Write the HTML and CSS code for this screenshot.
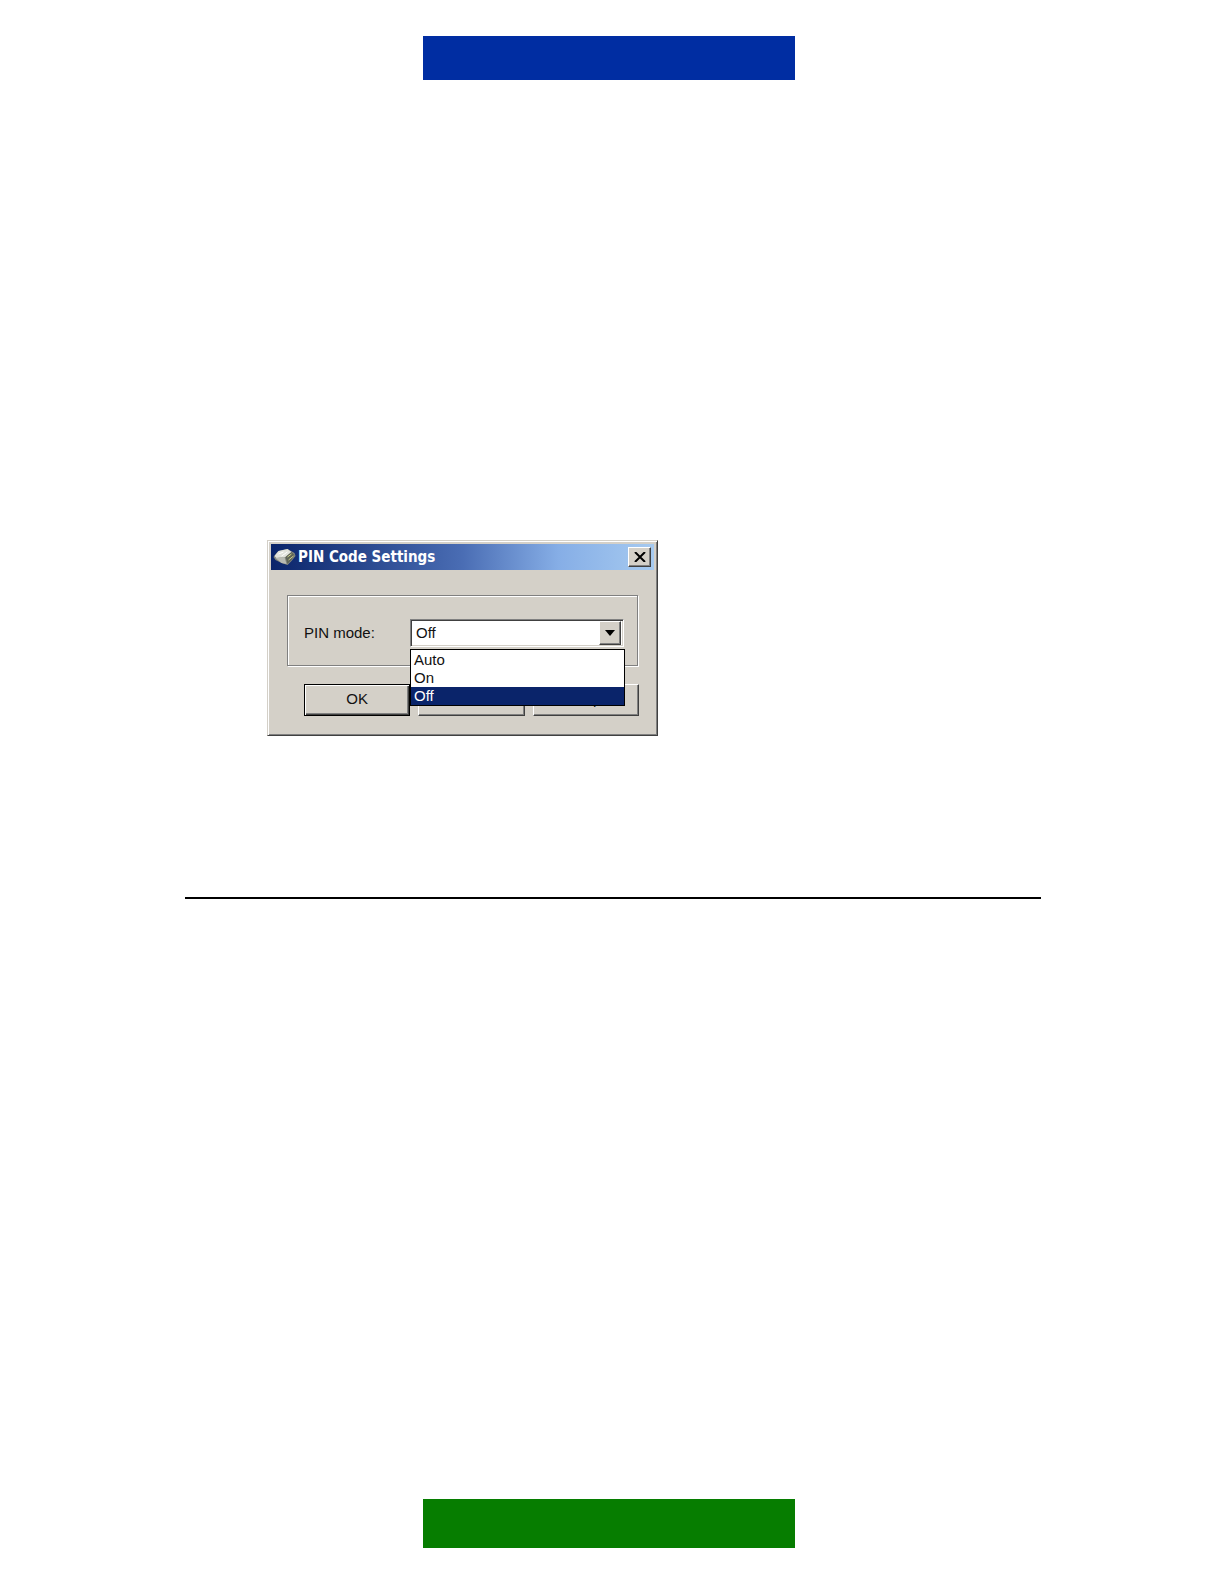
FILE: index.html
```html
<!DOCTYPE html>
<html lang="en">
<head>
    <meta charset="UTF-8">
    <meta name="viewport" content="width=device-width, initial-scale=1.0">
    <title>PIN Code Settings</title>
    <link rel="stylesheet" href="styles.css">
</head>
<body>

<header class="page-header">
    <div class="banner banner-blue"></div>
</header>

<main class="content">
    <section class="dialog" role="dialog" aria-labelledby="dialog-title">
        <div class="title-bar">
            <svg class="title-icon" viewBox="0 0 22 18" aria-hidden="true">
                <path d="M0 9 L3 5 L5 3 L14 1 L21 5 L22 8 L18 13 L14 17 L8 15 L2 12 Z" fill="#85887e"/>
                <path d="M1 8 L5 3 L14 1 L18 4 L12 9 L3 10 Z" fill="#e2e3dc"/>
                <path d="M2 10 L11 9 L13 16 L8 15 Z" fill="#b9bbb3"/>
                <path d="M12 9 L18 4 L21 7 L18 12 L14 16 Z" fill="#5f6558"/>
                <path d="M14 9 L18 6 M15 12 L20 8" stroke="#cfd08c" stroke-width="1"/>
                <path d="M5 6 L10 4 M8 8 L14 4" stroke="#fff" stroke-width="1"/>
            </svg>
            <h1 class="title-text" id="dialog-title">PIN Code Settings</h1>
            <button class="close-btn" type="button" aria-label="Close">
                <svg width="12" height="10" viewBox="0 0 12 10" aria-hidden="true">
                    <path d="M1 0 L11 10 M11 0 L1 10" stroke="#000" stroke-width="2"/>
                </svg>
            </button>
        </div>

        <form class="dialog-body">
            <div class="group">
                <label class="group-label" for="pin-mode">PIN mode:</label>
                <div class="combo">
                    <select class="combo-select" id="pin-mode">
                        <option>Auto</option>
                        <option>On</option>
                        <option selected>Off</option>
                    </select>
                    <span class="combo-arrow">
                        <svg width="10" height="6" viewBox="0 0 10 6" aria-hidden="true">
                            <path d="M0 0 H10 L5 6 Z" fill="#000"/>
                        </svg>
                    </span>
                    <ul class="combo-list" role="listbox" aria-label="PIN mode">
                        <li class="combo-item" role="option">Auto</li>
                        <li class="combo-item" role="option">On</li>
                        <li class="combo-item active" role="option" aria-selected="true">Off</li>
                    </ul>
                </div>
            </div>

            <div class="buttons">
                <button class="btn btn-default" type="button">OK</button>
                <button class="btn" type="button">Cancel</button>
                <button class="btn" type="button">Help</button>
            </div>
        </form>
    </section>

    <hr class="divider">
</main>

<footer class="page-footer">
    <div class="banner banner-green"></div>
</footer>

</body>
</html>
```
FILE: styles.css
```css
* {
    box-sizing: border-box;
}

body {
    background-color: #fff;
    font-family: "Liberation Sans", Arial, sans-serif;
    font-size: 15px;
    color: #111;
    display: flex;
    flex-direction: column;
    min-height: 100vh;
    margin: 0;
}

.page-header,
.page-footer {
    display: flex;
    justify-content: center;
    padding: 36px 6px 36px 0;
}

.page-footer {
    margin-top: auto;
}

.banner {
    width: 100%;
    max-width: 372px;
}

.banner-blue {
    background-color: #002da2;
    height: 44px;
}

.banner-green {
    background-color: #067d00;
    height: 49px;
}

.content {
    padding: 424px 183px 0 185px;
}

.dialog {
    max-width: 391px;
    margin-left: 82px;
    padding: 3px;
    background-color: #d4d0c8;
    border: 1px solid;
    border-color: #d4d0c8 #404040 #404040 #d4d0c8;
    box-shadow: inset 1px 1px #fff, inset -1px -1px #808080;
}

.title-bar {
    display: flex;
    align-items: center;
    height: 26px;
    padding: 0 3px 0 2px;
    background: linear-gradient(to right, #0a246a, #4a6db4 50%, #86aee6 75%, #a6caf0);
}

.title-icon {
    width: 23px;
    height: 18px;
}

.title-text {
    flex: 1;
    margin: 0 0 0 2px;
    font-family: "DejaVu Sans Condensed", Tahoma, sans-serif;
    font-size: 15px;
    font-weight: bold;
    line-height: 26px;
    color: #fff;
    white-space: nowrap;
}

.close-btn {
    display: flex;
    align-items: center;
    justify-content: center;
    width: 23px;
    height: 20px;
    padding: 0;
    background-color: #d4d0c8;
    border: 1px solid;
    border-color: #fff #404040 #404040 #fff;
    box-shadow: inset -1px -1px #808080;
}

.dialog-body {
    padding: 25px 16px 16px;
}

.group {
    display: flex;
    align-items: center;
    height: 71px;
    padding: 4px 13px 0 16px;
    border: 1px solid #808080;
    box-shadow: inset 1px 1px #fff, 1px 1px #fff;
}

.group-label {
    flex: 1;
}

.combo {
    position: relative;
    display: flex;
    width: 214px;
    height: 28px;
    padding: 1px 2px 1px 1px;
    background-color: #fff;
    border: 1px solid;
    border-color: #808080 #fff #fff #808080;
    box-shadow: inset 1px 1px #404040, inset -1px -1px #d4d0c8;
}

.combo-select {
    flex: 1;
    padding: 0 4px;
    appearance: none;
    background: none;
    border: none;
    outline: none;
    font: inherit;
    color: inherit;
}

.combo-arrow {
    display: flex;
    align-items: center;
    justify-content: center;
    width: 22px;
    background-color: #d4d0c8;
    border: 1px solid;
    border-color: #fff #404040 #404040 #fff;
    box-shadow: inset -1px -1px #808080;
    pointer-events: none;
}

/* open drop-down, hangs below the combo box over the buttons */
.combo-list {
    position: absolute;
    top: 29px;
    left: -1px;
    right: -2px;
    margin: 0;
    padding: 1px 0 0;
    background-color: #fff;
    border: 1px solid #000;
    list-style: none;
}

.combo-item {
    height: 18px;
    padding: 0 3px;
    line-height: 18px;
}

.combo-item.active {
    background-color: #0a246a;
    color: #fff;
}

.buttons {
    display: flex;
    gap: 8px;
    padding-left: 17px;
    margin: 18px -1px 0 0;
}

.btn {
    flex: 1;
    height: 32px;
    padding: 0 0 3px;
    background-color: #d4d0c8;
    border: 1px solid;
    border-color: #fff #404040 #404040 #fff;
    box-shadow: inset -1px -1px #808080;
    font: inherit;
    color: inherit;
}

.btn-default {
    border-color: #000;
    box-shadow: inset 1px 1px #fff, inset -1px -1px #404040, inset -2px -2px #808080;
}

.divider {
    height: 2px;
    margin: 161px 0 0;
    background-color: #000;
    border: none;
}
```
